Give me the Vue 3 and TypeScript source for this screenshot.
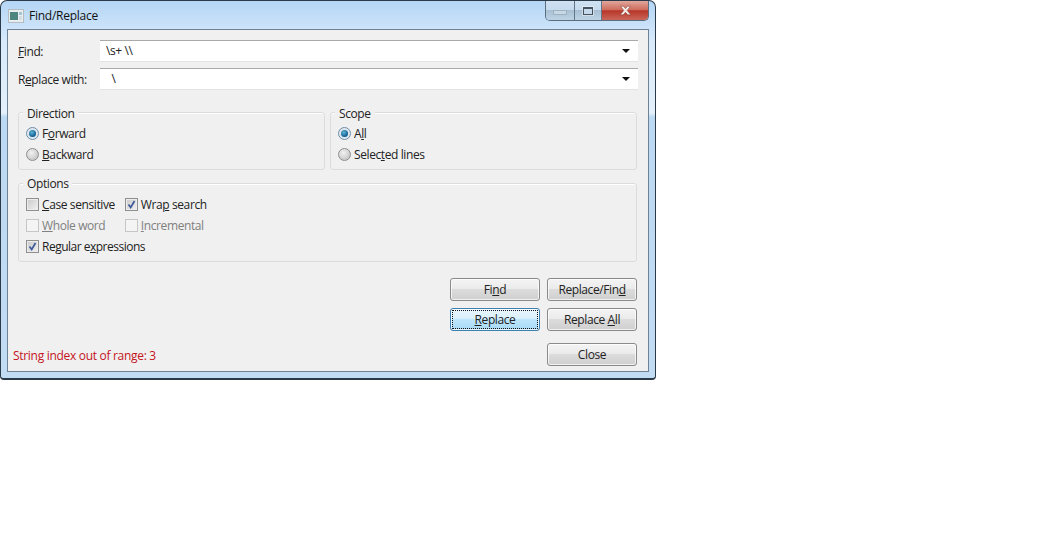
<script setup lang="ts">
const arrow = 'M0 0h8l-4 4z'
</script>

<template>
  <div class="window">
    <div class="titlebar">
      <svg class="app-icon" width="16" height="14" viewBox="0 0 16 14">
        <rect x="0.5" y="0.5" width="15" height="13" fill="#e8edf0" stroke="#b4bcc2" />
        <rect x="2" y="3" width="8" height="8" fill="#4f8580" />
        <rect x="11" y="3" width="3" height="3" fill="#a9c3d6" />
        <rect x="11" y="7" width="3" height="4" fill="#d5dde2" />
      </svg>
      <span class="title">Find/Replace</span>
      <div class="caption">
        <div class="cap cap-min"><span class="min-glyph"></span></div>
        <div class="cap cap-max"><span class="max-glyph"></span></div>
        <div class="cap cap-close">
          <svg width="15" height="11" viewBox="0 0 15 11">
            <path d="M2.5 1.2h3l2 2.4 2-2.4h3L9.2 5.4l3.6 4.4h-3L7.500 7.300 5.200 9.800h-3l3.600-4.400z" fill="#f6eeea" stroke="#7a3a32" stroke-width="0.5" />
          </svg>
        </div>
      </div>
    </div>

    <div class="client">
      <div class="field">
        <label class="field-label"><u>F</u>ind:</label>
        <div class="combo">
          <span class="combo-text">\s+ \\</span>
          <svg width="8" height="4" viewBox="0 0 8 4"><path :d="arrow" fill="#111" /></svg>
        </div>
      </div>
      <div class="field">
        <label class="field-label">R<u>e</u>place with:</label>
        <div class="combo">
          <span class="combo-text">&nbsp;&nbsp;\</span>
          <svg width="8" height="4" viewBox="0 0 8 4"><path :d="arrow" fill="#111" /></svg>
        </div>
      </div>

      <div class="group-row">
        <section class="group">
          <span class="legend">Direction</span>
          <div class="row"><span class="radio on"><i></i></span><span>F<u>o</u>rward</span></div>
          <div class="row"><span class="radio"></span><span><u>B</u>ackward</span></div>
        </section>
        <section class="group">
          <span class="legend">Scope</span>
          <div class="row"><span class="radio on"><i></i></span><span>A<u>l</u>l</span></div>
          <div class="row"><span class="radio"></span><span>Selec<u>t</u>ed lines</span></div>
        </section>
      </div>

      <section class="group options">
        <span class="legend">Options</span>
        <div class="opt-grid">
          <div class="row"><span class="check"></span><span><u>C</u>ase sensitive</span></div>
          <div class="row">
            <span class="check">
              <svg width="9" height="9" viewBox="0 0 9 9"><path d="M1.500 4.500l2.200 3L7.500 1" fill="none" stroke="#3d5a9a" stroke-width="1.700" /></svg>
            </span>
            <span>Wra<u>p</u> search</span>
          </div>
          <div class="row disabled"><span class="check off"></span><span><u>W</u>hole word</span></div>
          <div class="row disabled"><span class="check off"></span><span><u>I</u>ncremental</span></div>
          <div class="row wide">
            <span class="check">
              <svg width="9" height="9" viewBox="0 0 9 9"><path d="M1.500 4.500l2.200 3L7.500 1" fill="none" stroke="#3d5a9a" stroke-width="1.700" /></svg>
            </span>
            <span class="tight">Regular e<u>x</u>pressions</span>
          </div>
        </div>
      </section>

      <div class="actions">
        <button class="btn">Fi<u>n</u>d</button>
        <button class="btn">Replace/Fin<u>d</u></button>
        <button class="btn focus"><u>R</u>eplace</button>
        <button class="btn">Replace <u>A</u>ll</button>
      </div>

      <div class="footer">
        <span class="status">String index out of range: 3</span>
        <button class="btn">Close</button>
      </div>
    </div>
  </div>
</template>

<style>
html, body { margin: 0; background: #fff; }
</style>

<style scoped>
.window {
  box-sizing: border-box;
  width: 656px;
  height: 380px;
  border: 1px solid #2b3a48;
  border-bottom-width: 2px;
  border-radius: 7px 7px 4px 4px;
  background: linear-gradient(#b4d6f5 0, #d8eafb 40px, #e4f0fb 112px, #bcd9f3 116px, #c2dcf4 100%);
  padding: 0 6px 6px;
  display: flex;
  flex-direction: column;
  font: 12px/16px "Open Sans", "Noto Sans", sans-serif;
  letter-spacing: -0.4px;
  color: #222;
  overflow: hidden;
}
.titlebar {
  height: 28px;
  flex: none;
  display: flex;
  align-items: flex-start;
}
.app-icon { margin: 8px 5px 0 1px; flex: none; }
.title { margin-top: 7px; font-size: 12px; color: #111; letter-spacing: -0.25px; }
.caption {
  margin-left: auto;
  height: 19px;
  display: flex;
  border: 1px solid #5a6e80;
  border-top: 0;
  border-radius: 0 0 5px 5px;
  overflow: hidden;
}
.cap {
  display: flex;
  align-items: center;
  justify-content: center;
}
.cap-min, .cap-max {
  width: 28px;
  background: linear-gradient(#cfe1f1 0, #c6dbed 45%, #a9bfd2 50%, #bdd3e6 100%);
  border-right: 1px solid #62768a;
}
.cap-max { width: 26px; }
.cap-close {
  width: 46px;
  background: linear-gradient(#e0a79c 0, #cf6e5f 45%, #b8372a 52%, #c9675a 100%);
}
.min-glyph {
  width: 12px;
  height: 3px;
  margin-top: 4px;
  background: #c8d7e4;
  border: 1px solid #9db1c3;
}
.max-glyph {
  box-sizing: border-box;
  width: 10px;
  height: 8px;
  border: 1px solid #46535f;
  border-top-width: 2px;
  background: #c5d9ea;
  box-shadow: 0 0 0 1px rgba(255, 255, 255, .4);
}
.client {
  flex: 1;
  min-height: 0;
  box-sizing: border-box;
  border: 1px solid #6f8294;
  background: #f0f0f0;
  padding: 10px 10px 6px;
  display: flex;
  flex-direction: column;
}
.field {
  display: flex;
  align-items: center;
  height: 22px;
  margin-bottom: 6px;
}
.field-label { width: 82px; flex: none; padding-top: 2px; }
.combo {
  flex: 1;
  box-sizing: border-box;
  height: 22px;
  background: #fff;
  border-top: 1px solid #a9a9a9;
  border-bottom: 1px solid #e3e3e3;
  display: flex;
  align-items: center;
  justify-content: space-between;
  padding: 0 8px 0 6px;
}
.combo-text { color: #222; }
.group-row {
  display: grid;
  grid-template-columns: 307px 307px;
  gap: 5px;
  margin-top: 16px;
}
.group {
  position: relative;
  box-sizing: border-box;
  border: 1px solid #dcdcdc;
  border-radius: 3px;
  padding: 10px 7px 4px;
  box-shadow: 0 1px 0 #fff inset;
}
.legend {
  position: absolute;
  left: 4px;
  top: -7px;
  padding: 0 4px;
  background: #f0f0f0;
}
.options .legend { top: -8px; }
.row {
  height: 21px;
  display: flex;
  align-items: center;
  gap: 3px;
  white-space: nowrap;
}
.tight { letter-spacing: -0.5px; }
.options {
  margin-top: 13px;
  width: 619px;
}
.opt-grid {
  display: grid;
  grid-template-columns: max-content max-content;
  column-gap: 10px;
}
.wide { grid-column: 1 / 3; }
.disabled { color: #808080; }
.radio {
  box-sizing: border-box;
  width: 13px;
  height: 13px;
  border-radius: 50%;
  border: 1px solid #8e8f8f;
  background: radial-gradient(circle at 40% 35%, #f2f2f2, #cacaca 70%, #b0b0b0);
  display: flex;
  align-items: center;
  justify-content: center;
  flex: none;
}
.radio.on { border-color: #6f8ea8; background: #dfe8ef; }
.radio i {
  display: block;
  width: 7px;
  height: 7px;
  border-radius: 50%;
  background: radial-gradient(circle at 40% 35%, #5fb4d8, #0d5c8c 70%);
}
.check {
  box-sizing: border-box;
  width: 13px;
  height: 13px;
  border: 1px solid #8e8f8f;
  background: linear-gradient(135deg, #c9c9c9, #f2f2f2);
  box-shadow: inset 0 0 0 1px #ececec;
  display: flex;
  align-items: center;
  justify-content: center;
  flex: none;
}
.check.off {
  border-color: #c6c6c6;
  background: #f4f4f4;
  box-shadow: none;
}
.actions {
  margin-top: 16px;
  align-self: flex-end;
  display: grid;
  grid-template-columns: 90px 90px;
  column-gap: 7px;
  row-gap: 7px;
  margin-right: 1px;
}
.btn {
  box-sizing: border-box;
  width: 90px;
  height: 23px;
  padding: 1px 0 0;
  border: 1px solid #8a8a8a;
  border-radius: 3px;
  background: linear-gradient(#f4f4f4 0, #ebebeb 45%, #dcdcdc 50%, #cfcfcf 100%);
  box-shadow: inset 0 0 0 1px rgba(255, 255, 255, .7);
  font: inherit;
  letter-spacing: inherit;
  color: #222;
  text-align: center;
}
.btn.focus {
  border-color: #3c7fb1;
  background: linear-gradient(#eaf6fd 0, #d9f0fc 45%, #bee6fd 50%, #a7d9f5 100%);
  outline: 1px dotted #111;
  outline-offset: -3px;
}
.footer {
  margin: 12px 1px 0 -5px;
  display: flex;
  align-items: center;
  justify-content: space-between;
}
.status { color: #c4141c; padding-top: 2px; letter-spacing: -0.3px; }
</style>
